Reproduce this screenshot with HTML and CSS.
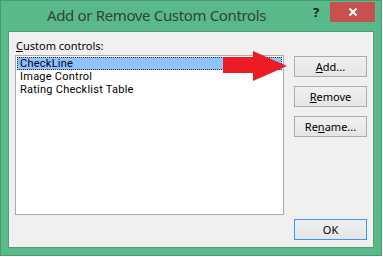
FILE: index.html
```html
<!DOCTYPE html>
<html>
<head>
<meta charset="utf-8">
<link rel="stylesheet" href="styles.css">
</head>
<body>
<div class="window">
  <div class="titlebar">
    <div class="title">Add or Remove Custom Controls</div>
    <div class="help">?</div>
    <div class="close">
      <svg width="10" height="10" viewBox="0 0 10 10"><path d="M1.5 1.5 L8.5 8.5 M8.5 1.5 L1.5 8.5" stroke="#fff" stroke-width="2"/></svg>
    </div>
  </div>
  <div class="client">
    <div class="leftcol">
      <div class="label"><u>C</u>ustom controls:</div>
      <div class="listbox">
        <div class="item selected">CheckLine</div>
        <div class="item">Image Control</div>
        <div class="item">Rating Checklist Table</div>
      </div>
    </div>
    <div class="rightcol">
      <div class="btn"><u>A</u>dd...</div>
      <div class="btn"><u>R</u>emove</div>
      <div class="btn">Re<u>n</u>ame...</div>
      <div class="btn ok">OK</div>
    </div>
  </div>
  <svg class="arrow" width="70" height="34" viewBox="220 49 70 34">
    <polygon points="223,57 253,57 253,51 287,66 253,81 253,73 223,73" fill="#ed1c24"/>
  </svg>
</div>
</body>
</html>
```
FILE: styles.css
```css
html, body {
  margin: 0;
  padding: 0;
  background: #ffffff;
}
.window {
  position: relative;
  box-sizing: border-box;
  width: 382px;
  height: 256px;
  background: #5ab98a;
  border: 1px solid #4a9a70;
  padding: 0 7px 7px 7px;
  display: flex;
  flex-direction: column;
  font-family: "Noto Sans", "Open Sans", sans-serif;
}
.titlebar {
  height: 30px;
  display: flex;
  align-items: flex-start;
  position: relative;
}
.title {
  margin-left: 39px;
  margin-top: 4px;
  font-size: 15px;
  letter-spacing: -0.35px;
  line-height: 21px;
  color: #30443a;
  white-space: nowrap;
}
.help {
  position: absolute;
  left: 305px;
  top: 3px;
  font-size: 13px;
  font-weight: bold;
  line-height: 16px;
  color: #222;
}
.close {
  position: absolute;
  left: 322px;
  top: 1px;
  width: 45px;
  height: 20px;
  background: #c75050;
  display: flex;
  align-items: center;
  justify-content: center;
}
.close svg { display: block; }
.client {
  box-sizing: border-box;
  height: 217px;
  background: #f0f0f0;
  border: 1px solid #4f9e76;
  padding: 6px 6px 7px 6px;
  display: flex;
  gap: 10px;
  font-size: 11px;
  color: #000;
}
.leftcol {
  display: flex;
  flex-direction: column;
  width: 269px;
}
.label {
  height: 17px;
  line-height: 15px;
  padding-left: 1px;
  white-space: nowrap;
}
.listbox {
  box-sizing: border-box;
  height: 160px;
  background: #fff;
  border: 1px solid #acacac;
  padding: 1px;
}
.item {
  box-sizing: border-box;
  height: 13px;
  line-height: 12px;
  padding-left: 2px;
  white-space: nowrap;
  border: 1px solid transparent;
  font-family: Roboto, "Noto Sans", sans-serif;
  font-size: 11px;
  letter-spacing: 0.25px;
}
.item.selected {
  background: #8fc3ff;
  border: 1px dotted #333;
}
.rightcol {
  display: flex;
  flex-direction: column;
  width: 73px;
  padding-top: 18px;
  gap: 9px;
}
.btn {
  box-sizing: border-box;
  height: 21px;
  line-height: 19px;
  text-align: center;
  border: 1px solid #acacac;
  background: linear-gradient(#f0f0f0, #e5e5e5);
  white-space: nowrap;
}
.btn.ok {
  margin-top: auto;
  border-color: #3c96f5;
}
.arrow {
  position: absolute;
  left: 219px;
  top: 48px;
}
```
